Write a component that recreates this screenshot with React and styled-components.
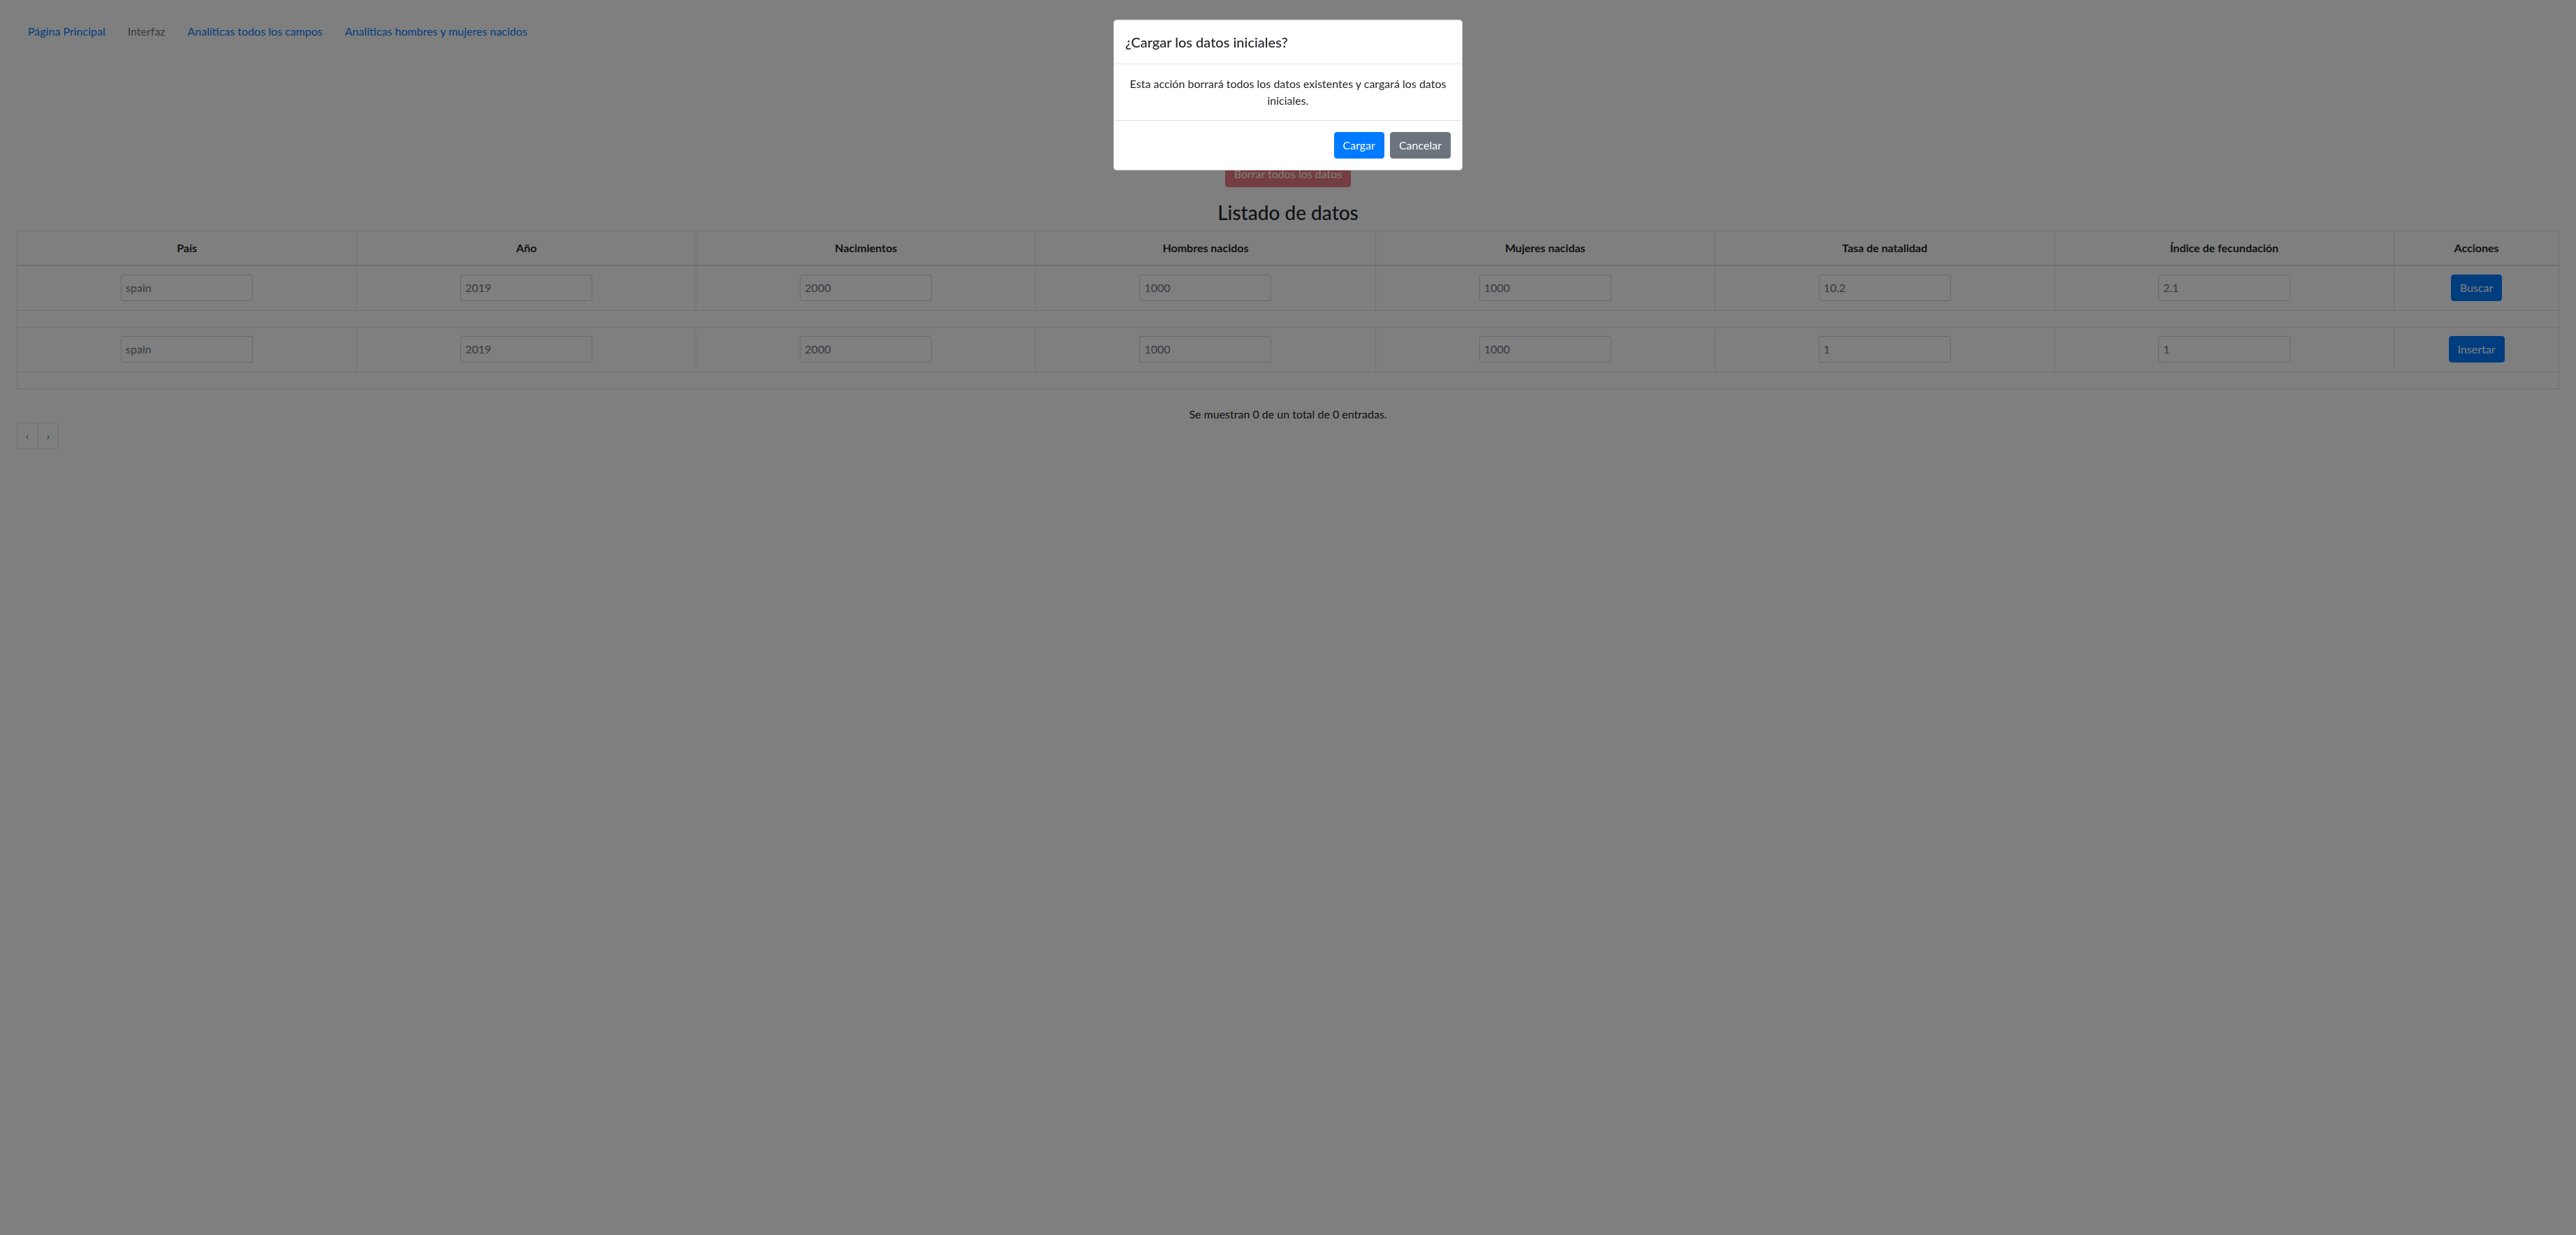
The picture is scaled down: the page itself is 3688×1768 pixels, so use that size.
import React from "react";
import styled, { createGlobalStyle } from "styled-components";

const GlobalStyle = createGlobalStyle`
  body {
    margin: 0;
    background: #ffffff;
    color: #212529;
    font-family: "Segoe UI", Lato, "Liberation Sans", sans-serif;
    font-size: 16px;
    line-height: 1.5;
  }
  * {
    box-sizing: border-box;
  }
`;

const columns = [
  { key: "country", label: "País", search: "spain", insert: "spain" },
  { key: "year", label: "Año", search: "2019", insert: "2019" },
  { key: "births", label: "Nacimientos", search: "2000", insert: "2000" },
  { key: "men", label: "Hombres nacidos", search: "1000", insert: "1000" },
  { key: "women", label: "Mujeres nacidas", search: "1000", insert: "1000" },
  { key: "rate", label: "Tasa de natalidad", search: "10.2", insert: "1" },
  { key: "fertility", label: "Índice de fecundación", search: "2.1", insert: "1" },
];

function App() {
  return (
    <>
      <GlobalStyle />
      <Page>
        <Nav>
          <NavLink href="#">Página Principal</NavLink>
          <NavLink href="#" $muted>
            Interfaz
          </NavLink>
          <NavLink href="#">Analíticas todos los campos</NavLink>
          <NavLink href="#">Analíticas hombres y mujeres nacidos</NavLink>
        </Nav>

        <Toolbar>
          <Button $variant="danger" disabled>
            Borrar todos los datos
          </Button>
        </Toolbar>

        <Title>Listado de datos</Title>

        <Table>
          <colgroup>
            {columns.map((c) => (
              <col key={c.key} />
            ))}
            <col style={{ width: "236px" }} />
          </colgroup>
          <thead>
            <tr>
              {columns.map((c) => (
                <th key={c.key}>{c.label}</th>
              ))}
              <th>Acciones</th>
            </tr>
          </thead>
          <tbody>
            <InputRow>
              {columns.map((c) => (
                <td key={c.key}>
                  <Field placeholder={c.search} />
                </td>
              ))}
              <td>
                <Button $variant="primary">Buscar</Button>
              </td>
            </InputRow>
            <EmptyRow>
              <td colSpan={8} />
            </EmptyRow>
            <InputRow>
              {columns.map((c) => (
                <td key={c.key}>
                  <Field placeholder={c.insert} />
                </td>
              ))}
              <td>
                <Button $variant="primary">Insertar</Button>
              </td>
            </InputRow>
            <EmptyRow>
              <td colSpan={8} />
            </EmptyRow>
          </tbody>
        </Table>

        <Info>Se muestran 0 de un total de 0 entradas.</Info>

        <Pagination>
          <PageItem $disabled>‹</PageItem>
          <PageItem>›</PageItem>
        </Pagination>
      </Page>

      <Backdrop>
        <Dialog>
          <DialogHeader>
            <DialogTitle>¿Cargar los datos iniciales?</DialogTitle>
          </DialogHeader>
          <DialogBody>
            Esta acción borrará todos los datos existentes y cargará los datos
            iniciales.
          </DialogBody>
          <DialogFooter>
            <Button $variant="primary">Cargar</Button>
            <Button $variant="secondary">Cancelar</Button>
          </DialogFooter>
        </Dialog>
      </Backdrop>
    </>
  );
}

const variants = {
  primary: "#007bff",
  secondary: "#6c757d",
  danger: "#dc3545",
};

const Page = styled.div`
  padding: 25px 24px 40px;
`;

const Nav = styled.nav`
  display: flex;
`;

const NavLink = styled.a`
  display: block;
  padding: 8px 16px;
  color: ${(p) => (p.$muted ? "#6c757d" : "#007bff")};
  text-decoration: none;
`;

const Toolbar = styled.div`
  display: flex;
  justify-content: center;
  margin-top: 165px;
`;

const Button = styled.button`
  display: inline-block;
  height: 38px;
  padding: 6px 12px;
  border: 1px solid ${(p) => variants[p.$variant]};
  border-radius: 4px;
  background: ${(p) => variants[p.$variant]};
  color: #ffffff;
  font-family: inherit;
  font-size: 16px;
  line-height: 24px;
  cursor: pointer;

  &:disabled {
    opacity: 0.65;
    cursor: default;
  }
`;

const Title = styled.h3`
  margin: 20px 0 8px;
  font-size: 28px;
  font-weight: 500;
  line-height: 1.2;
  text-align: center;
`;

const Table = styled.table`
  width: 100%;
  table-layout: fixed;
  border-collapse: collapse;
  border: 1px solid #dee2e6;
  margin-bottom: 24px;

  th,
  td {
    padding: 12px;
    border: 1px solid #dee2e6;
    text-align: center;
    vertical-align: middle;
  }

  th {
    border-bottom-width: 2px;
    font-weight: 700;
  }
`;

const InputRow = styled.tr`
  td {
    padding: 12px 12px 13px;
  }
`;

const EmptyRow = styled.tr`
  td {
    height: 24px;
    padding: 0;
  }
`;

const Field = styled.input`
  width: 189px;
  height: 38px;
  padding: 6px;
  border: 1px solid #ced4da;
  border-radius: 3px;
  font-family: inherit;
  font-size: 16px;
  color: #495057;
  vertical-align: middle;

  &::placeholder {
    color: #6c757d;
  }
`;

const Info = styled.p`
  margin: 0;
  text-align: center;
`;

const Pagination = styled.ul`
  display: flex;
  margin: 0;
  padding: 0;
  list-style: none;
`;

const PageItem = styled.li`
  padding: 8px 12px;
  line-height: 20px;
  border: 1px solid #dee2e6;
  color: ${(p) => (p.$disabled ? "#6c757d" : "#007bff")};

  &:first-child {
    border-radius: 4px 0 0 4px;
  }
  &:last-child {
    margin-left: -1px;
    border-radius: 0 4px 4px 0;
  }
`;

const Backdrop = styled.div`
  position: fixed;
  inset: 0;
  background: rgba(0, 0, 0, 0.5);
`;

const Dialog = styled.div`
  width: 500px;
  margin: 28px auto;
  background: #ffffff;
  border: 1px solid rgba(0, 0, 0, 0.2);
  border-radius: 4.8px;
`;

const DialogHeader = styled.div`
  padding: 16px;
  border-bottom: 1px solid #dee2e6;
`;

const DialogTitle = styled.h5`
  margin: 0;
  font-size: 20px;
  font-weight: 500;
  line-height: 1.5;
`;

const DialogBody = styled.div`
  padding: 16px;
  text-align: center;
`;

const DialogFooter = styled.div`
  display: flex;
  justify-content: flex-end;
  gap: 8px;
  padding: 16px;
  border-top: 1px solid #dee2e6;
`;

export default App;
